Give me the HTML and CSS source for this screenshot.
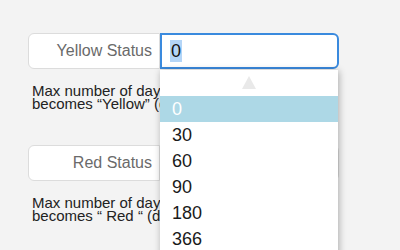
FILE: index.html
```html
<!DOCTYPE html>
<html lang="en">
<head>
    <meta charset="UTF-8">
    <title>Status Settings</title>
    <link rel="stylesheet" href="styles.css">
</head>
<body>

<div class="settings">
    <!-- Yellow status -->
    <div class="field-row">
        <label class="field-label" for="yellowDays">Yellow Status</label>
        <div class="field-input focused" id="yellowDays"><span class="selected-text">0</span></div>
    </div>
    <p class="field-help">Max number of days before status<br>becomes “Yellow” (days)</p>

    <!-- Red status -->
    <div class="field-row">
        <label class="field-label" for="redDays">Red Status</label>
        <div class="field-input" id="redDays">0</div>
    </div>
    <p class="field-help">Max number of days before status<br>becomes “ Red “ (days)</p>

    <!-- Open picker list for the yellow field -->
    <div class="picker">
        <div class="picker-arrow"></div>
        <ul class="picker-list">
            <li class="active">0</li>
            <li>30</li>
            <li>60</li>
            <li>90</li>
            <li>180</li>
            <li>366</li>
        </ul>
    </div>
</div>

</body>
</html>
```

FILE: styles.css
```css
body {
    margin: 0;
    background-color: #f3f3f3;
    font-family: "Liberation Sans", Arial, sans-serif;
    overflow: hidden;
}

.settings {
    position: relative;
    padding: 33px 0 0 28px;
}

.field-row {
    display: flex;
    width: 311px;
    height: 36px;
}

.field-label {
    box-sizing: border-box;
    width: 132px;
    padding-right: 7px;
    border: 1px solid #dcdcdc;
    border-radius: 6px 0 0 6px;
    background-color: #fff;
    color: #6a6a6a;
    font-size: 16px;
    line-height: 34px;
    text-align: right;
}

.field-input {
    box-sizing: border-box;
    flex: 1;
    padding-left: 8px;
    border: 1px solid #dcdcdc;
    border-left: none;
    border-radius: 0 6px 6px 0;
    background-color: #fff;
    color: #111;
    font-size: 18px;
    line-height: 34px;
}

.field-input.focused {
    border: 2px solid #3a8ade;
    line-height: 32px;
}

.selected-text {
    background-color: #b4d5f7;
    padding: 1px 1px;
}

.field-help {
    margin: 15px 0 35px 4px;
    color: #222;
    font-size: 15px;
    line-height: 13px;
}

/* dropdown overlaying the form */
.picker {
    position: absolute;
    left: 160px;
    top: 70px;
    width: 178px;
    height: 200px;
    background-color: #fff;
    box-shadow: 1px 1px 7px rgba(0, 0, 0, 0.3);
}

.picker-arrow {
    width: 0;
    height: 0;
    margin: 6px auto 7px;
    border-left: 7px solid transparent;
    border-right: 7px solid transparent;
    border-bottom: 13px solid #e9e9e9;
}

.picker-list {
    list-style: none;
    margin: 0;
    padding: 0;
}

.picker-list li {
    height: 26px;
    padding-left: 12px;
    color: #1a1a1a;
    font-size: 18px;
    line-height: 26px;
}

.picker-list li.active {
    background-color: #add8e6;
    color: #fff;
}
```
